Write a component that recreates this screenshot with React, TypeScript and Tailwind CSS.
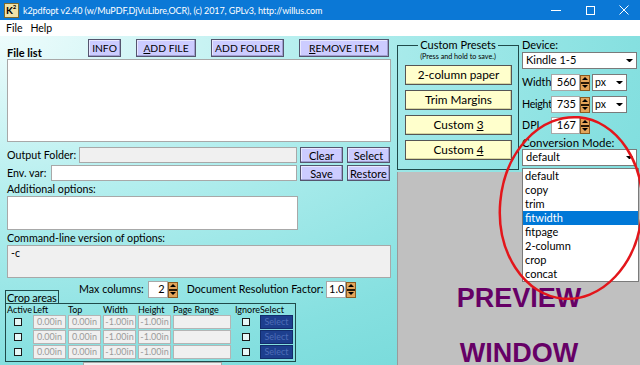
import React from "react";

function Tri({ up = false, size = 6, color = "#000" }: { up?: boolean; size?: number; color?: string }) {
  const h = size / 2;
  return (
    <svg width={size} height={h} viewBox={`0 0 ${size} ${h}`} className="block">
      <polygon points={up ? `0,${h} ${size / 2},0 ${size},${h}` : `0,0 ${size},0 ${size / 2},${h}`} fill={color} />
    </svg>
  );
}

function Spin() {
  return (
    <div className="flex flex-col w-[10px] h-[16px] bg-[#e3a55a] border border-[#8a5a20]">
      <div className="flex-1 flex items-center justify-center">
        <Tri up />
      </div>
      <div className="h-[2px] bg-[#2a1a08]" />
      <div className="flex-1 flex items-center justify-center">
        <Tri />
      </div>
    </div>
  );
}

function Arrow() {
  return (
    <div className="ml-auto w-[13px] h-full flex items-center justify-center">
      <Tri size={7} />
    </div>
  );
}

function LBtn({ className, children }: { className: string; children: React.ReactNode }) {
  return (
    <div
      className={`h-[18px] flex items-center justify-center bg-[#ccccff] border border-[#55556e] shadow-[inset_-1px_-1px_0_#9f9fd0,inset_1px_1px_0_#e8e8ff] leading-none ${className}`}
    >
      {children}
    </div>
  );
}

function YBtn({ children }: { children: React.ReactNode }) {
  return (
    <div className="w-[107px] h-[20px] flex items-center justify-center bg-[#ffffcc] border border-[#555] shadow-[inset_-1px_-1px_0_#d6d6a0] text-[11.8px] leading-none">
      {children}
    </div>
  );
}

const cropInput =
  "w-[33px] h-[14px] bg-[#f0f0f0] border border-[#b4b4b4] text-[9px] text-[#9a9a9a] flex items-center justify-center";

function CropRow() {
  return (
    <div className="grid grid-cols-[27px_35px_35px_35px_35px_62px_25px_34px] h-[15px] items-center">
      <div className="pl-[8px]">
        <div className="w-[8px] h-[8px] border border-[#1a1a1a] bg-[#e6f7f7]" />
      </div>
      <div className={cropInput}>0.00in</div>
      <div className={cropInput}>0.00in</div>
      <div className={cropInput}>-1.00in</div>
      <div className={cropInput}>-1.00in</div>
      <div className="w-[58px] h-[14px] bg-[#f0f0f0] border border-[#b4b4b4]" />
      <div className="pl-[7px]">
        <div className="w-[8px] h-[8px] border border-[#1a1a1a] bg-[#e6f7f7]" />
      </div>
      <div className="w-[33px] h-[14px] bg-[#1d3f8e] border border-[#122c6c] text-[9px] text-[#4d6db8] flex items-center justify-center">
        Select
      </div>
    </div>
  );
}

export default function App() {
  const modes = ["default", "copy", "trim", "fitwidth", "fitpage", "2-column", "crop", "concat"];
  return (
    <div className="w-[640px] h-[365px] overflow-hidden relative bg-white text-black whitespace-nowrap font-['Lato','Noto_Sans',sans-serif]">
      {/* Title bar */}
      <div className="h-[20px] bg-[#0b78d6] flex items-center text-white">
        <div className="ml-[4px] w-[15px] h-[15px] bg-[#f0e2a8] border border-[#7a6a30] flex items-start pl-[1px] text-black text-[10px] font-bold leading-[12px]">
          K<span className="text-[6px] leading-[6px]">2</span>
        </div>
        <div className="ml-[4px] text-[9px] tracking-[-0.1px] leading-none">
          k2pdfopt v2.40 (w/MuPDF,DjVuLibre,OCR), (c) 2017, GPLv3, http://willus.com
        </div>
        <div className="ml-auto flex h-full">
          <div className="w-[34px] flex items-center justify-center">
            <div className="w-[10px] h-px bg-white" />
          </div>
          <div className="w-[34px] flex items-center justify-center">
            <div className="w-[9px] h-[9px] border border-white" />
          </div>
          <div className="w-[33px] flex items-center justify-center">
            <svg width="10" height="10" viewBox="0 0 10 10">
              <path d="M0.5 0.5 L9.5 9.5 M9.5 0.5 L0.5 9.5" stroke="#fff" strokeWidth="1" />
            </svg>
          </div>
        </div>
      </div>
      {/* Menu */}
      <div className="h-[16px] bg-white flex items-center text-[10.5px] leading-none">
        <span className="ml-[6px]">File</span>
        <span className="ml-[8px]">Help</span>
      </div>
      {/* Main */}
      <div className="h-[329px] flex bg-[radial-gradient(ellipse_at_top_left,#eefcfc_0%,#b3eeee_35%,#86e0e0_70%,#6cd6d6_100%)]">
        {/* Left column */}
        <div className="w-[397px] flex flex-col text-[10.7px] *:shrink-0">
          <div className="h-[23px] flex items-start pt-[3px]">
            <div className="w-[88px] pl-[7px] mt-[8px] text-[11px] font-bold leading-[12px]">File list</div>
            <LBtn className="w-[33px] text-[10.3px]">INFO</LBtn>
            <LBtn className="w-[60px] ml-[15px] text-[10.3px]">
              <span>
                <u>A</u>DD FILE
              </span>
            </LBtn>
            <LBtn className="w-[73px] ml-[15px] text-[10.3px]">ADD FOLDER</LBtn>
            <LBtn className="w-[90px] ml-[15px] text-[10.3px]">
              <span>
                <u>R</u>EMOVE ITEM
              </span>
            </LBtn>
          </div>
          <div className="ml-[7px] w-[384px] h-[83px] bg-white border border-[#a8a8a8]" />
          <div className="mt-[5px] h-[16px] flex items-center">
            <div className="w-[79px] pl-[7px]">Output Folder:</div>
            <div className="w-[218px] h-[16px] bg-[#f0f0f0] border border-[#a8a8a8]" />
            <LBtn className="w-[43px] !h-[16px] ml-[3px] text-[11px]">Clear</LBtn>
            <LBtn className="w-[43px] !h-[16px] ml-[4px] text-[11px]">Select</LBtn>
          </div>
          <div className="mt-[2px] h-[16px] flex items-center">
            <div className="w-[51px] pl-[7px]">Env. var:</div>
            <div className="w-[246px] h-[16px] bg-white border border-[#a8a8a8]" />
            <LBtn className="w-[43px] !h-[16px] ml-[3px] text-[11px]">Save</LBtn>
            <LBtn className="w-[43px] !h-[16px] ml-[4px] text-[11px]">Restore</LBtn>
          </div>
          <div className="h-[14px] pl-[7px] leading-[14px] mt-[1px]">Additional options:</div>
          <div className="ml-[7px] w-[291px] h-[34px] bg-white border border-[#a8a8a8]" />
          <div className="h-[15px] pl-[7px] leading-[16px]">Command-line version of options:</div>
          <div className="ml-[7px] w-[384px] h-[33px] bg-[#f0f0f0] border border-[#a8a8a8] px-[3px] text-[10.5px] leading-[14px]">
            -c
          </div>
          <div className="mt-[3px] h-[22px] flex">
            <div className="self-end ml-[5px] w-[54px] h-[13px] border border-b-0 border-[#1f4a4a] text-[11px] tracking-[-0.2px] leading-[13px] pl-[1px]">
              Crop areas
            </div>
            <div className="ml-[20px] h-[17px] flex items-center text-[10.7px]">
              <span>Max columns:</span>
              <div className="ml-[4px] w-[20px] h-[17px] bg-white border border-[#a8a8a8] flex items-center justify-end pr-[2px] text-[11px]">
                2
              </div>
              <Spin />
              <span className="ml-[9px]">Document Resolution Factor:</span>
              <div className="ml-[3px] w-[20px] h-[17px] bg-white border border-[#a8a8a8] flex items-center justify-end pr-[1px] text-[11px]">
                1.0
              </div>
              <Spin />
            </div>
          </div>
          <div className="ml-[5px] w-[291px] h-[59px] border border-[#1f4a4a] flex flex-col">
            <div className="grid grid-cols-[27px_35px_35px_35px_35px_62px_25px_34px] h-[10px] text-[9px] leading-[11px]">
              <span className="pl-[1px]">Active</span>
              <span>Left</span>
              <span>Top</span>
              <span>Width</span>
              <span>Height</span>
              <span>Page Range</span>
              <span>Ignore</span>
              <span>Select</span>
            </div>
            <CropRow />
            <CropRow />
            <CropRow />
          </div>
          <div className="ml-[83px] w-[139px] h-[10px] bg-[#f0f0f0] border border-[#a8a8a8]" />
        </div>
        {/* Right side */}
        <div className="flex-1 flex flex-col">
          <div className="h-[136px] shrink-0 flex items-start">
            {/* Custom presets */}
            <div className="mt-[3px] w-[122px] flex flex-col">
              <div className="flex h-[12px]">
                <div className="flex-1 h-[6px] self-end border-l border-t border-[#1f4a4a]" />
                <span className="px-[2px] text-[11px] leading-[12px]">Custom Presets</span>
                <div className="flex-1 h-[6px] self-end border-r border-t border-[#1f4a4a]" />
              </div>
              <div className="h-[119px] border-l border-r border-b border-[#1f4a4a] flex flex-col items-center">
                <div className="h-[14px] text-[7.2px] leading-[10px] pt-[1px]">(Press and hold to save.)</div>
                <div className="flex flex-col gap-[5px] ml-[1px]">
                  <YBtn>2-column paper</YBtn>
                  <YBtn>Trim Margins</YBtn>
                  <YBtn>
                    <span>
                      Custom <u>3</u>
                    </span>
                  </YBtn>
                  <YBtn>
                    <span>
                      Custom <u>4</u>
                    </span>
                  </YBtn>
                </div>
              </div>
            </div>
            {/* Device column */}
            <div className="ml-[3px] w-[117px] flex flex-col text-[10.7px]">
              <div className="mt-[2px] h-[14px] leading-[14px] text-[11px]">Device:</div>
              <div className="w-[115px] h-[17px] bg-white border border-[#7a7a7a] flex items-center pl-[3px] text-[11px]">
                Kindle 1-5
                <Arrow />
              </div>
              <div className="mt-[5px] h-[17px] flex items-center">
                <span className="w-[29px]">Width</span>
                <div className="w-[29px] h-[17px] bg-white border border-[#a8a8a8] flex items-center justify-end pr-[3px] text-[11px]">
                  560
                </div>
                <Spin />
                <div className="ml-[2px] w-[35px] h-[17px] bg-white border border-[#7a7a7a] flex items-center pl-[2px] text-[10.5px]">
                  px
                  <Arrow />
                </div>
              </div>
              <div className="mt-[5px] h-[17px] flex items-center">
                <span className="w-[29px] tracking-[-0.3px]">Height</span>
                <div className="w-[29px] h-[17px] bg-white border border-[#a8a8a8] flex items-center justify-end pr-[3px] text-[11px]">
                  735
                </div>
                <Spin />
                <div className="ml-[2px] w-[35px] h-[17px] bg-white border border-[#7a7a7a] flex items-center pl-[2px] text-[10.5px]">
                  px
                  <Arrow />
                </div>
              </div>
              <div className="mt-[4px] h-[17px] flex items-center">
                <span className="w-[29px]">DPI</span>
                <div className="w-[29px] h-[17px] bg-white border border-[#a8a8a8] flex items-center justify-end pr-[3px] text-[11px]">
                  167
                </div>
                <Spin />
              </div>
              <div className="mt-[1px] h-[14px] leading-[15px] text-[11.5px]">Conversion Mode:</div>
              <div className="relative">
                <div className="w-[115px] h-[17px] bg-white border border-[#7a7a7a] flex items-center pl-[3px] text-[11px]">
                  default
                  <Arrow />
                </div>
                <div className="absolute left-0 top-[19px] w-[117px] z-10 bg-white border border-[#7a7a7a] flex flex-col text-[11px]">
                  {modes.map((m) => (
                    <div
                      key={m}
                      className={
                        m === "fitwidth"
                          ? "h-[14px] leading-[14px] pl-[2px] bg-[#0078d7] text-white"
                          : "h-[14px] leading-[14px] pl-[2px]"
                      }
                    >
                      {m}
                    </div>
                  ))}
                </div>
              </div>
            </div>
          </div>
          {/* Preview */}
          <div className="flex-1 bg-[#c0c0c0] border-l border-[#9a9a9a] flex flex-col items-center pt-[112px] font-['Liberation_Sans',Arial,sans-serif] font-bold text-[27px] leading-[28px] text-[#660066]">
            <div>PREVIEW</div>
            <div className="mt-[27px]">WINDOW</div>
          </div>
        </div>
      </div>
      {/* Red annotation ellipse */}
      <svg className="absolute inset-0 pointer-events-none z-20" width="640" height="365" viewBox="0 0 640 365">
        <ellipse cx="571" cy="208" rx="71" ry="91" fill="none" stroke="#e3161b" strokeWidth="2.5" transform="rotate(5 571 208)" />
      </svg>
    </div>
  );
}
